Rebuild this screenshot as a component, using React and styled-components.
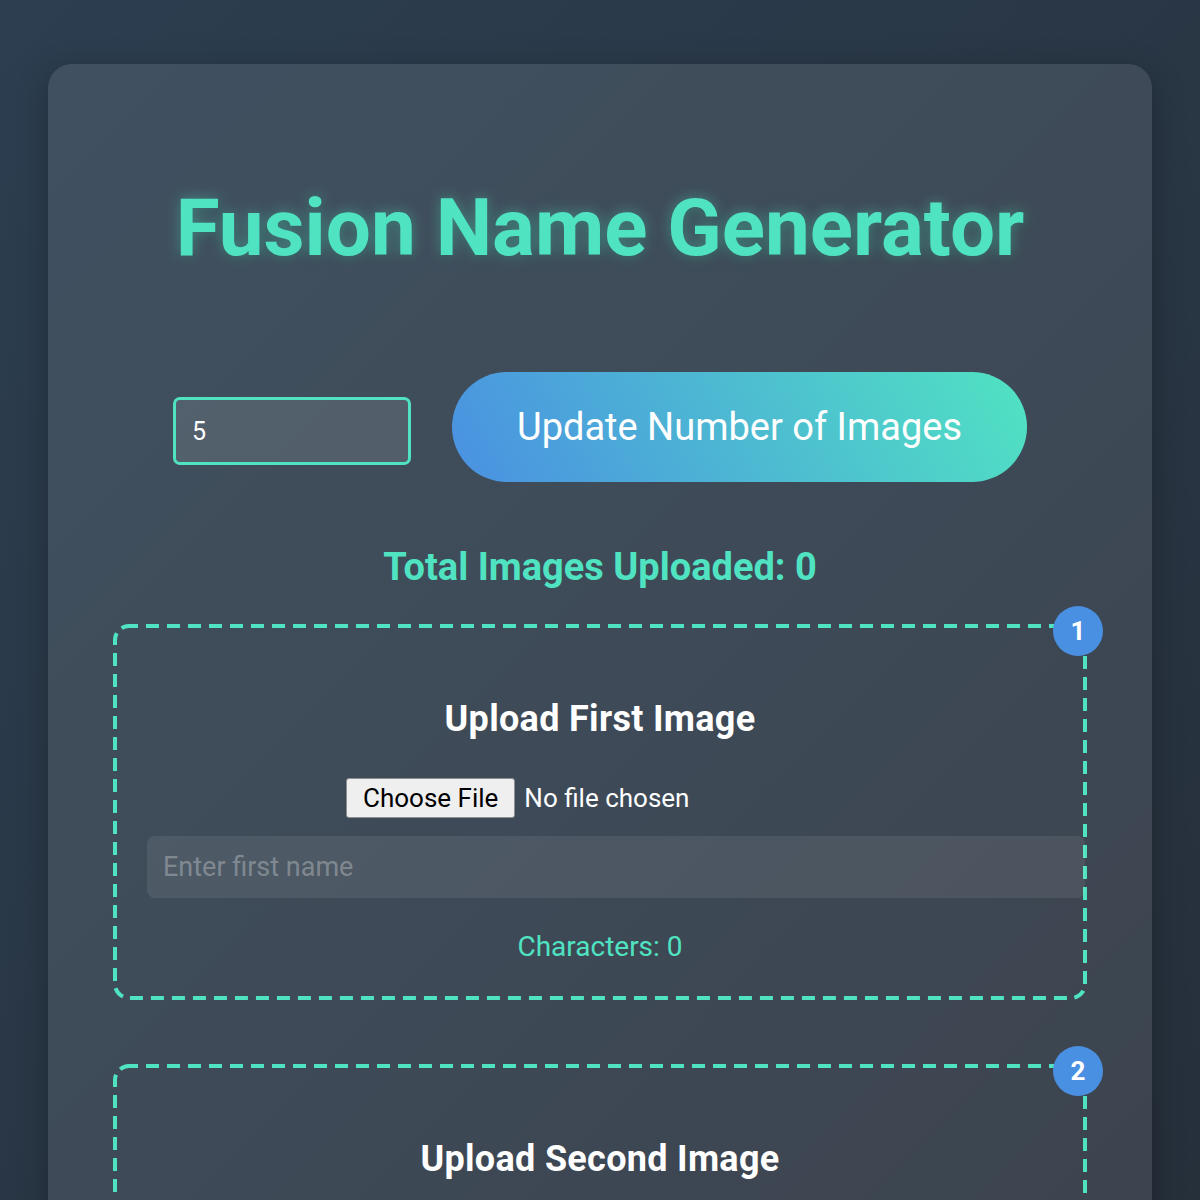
import React, { useState } from 'react'
import styled, { createGlobalStyle } from 'styled-components'

const GlobalStyle = createGlobalStyle`
  html, body {
    margin: 0;
    padding: 0;
  }
  body {
    min-height: 1200px;
    font-family: Roboto, 'Liberation Sans', sans-serif;
    background: linear-gradient(135deg, #2c3e50 0%, #262f3a 60%, #20262e 100%);
    color: #ffffff;
  }
`

// dashed outline drawn as svg so dash length matches (13 on / 8 off)
const dashedFrame = `url("data:image/svg+xml,%3Csvg xmlns='http://www.w3.org/2000/svg' width='100%25' height='100%25'%3E%3Crect width='100%25' height='100%25' rx='16' ry='16' fill='none' stroke='%2350E3C2' stroke-width='8' stroke-dasharray='13 8' stroke-dashoffset='4'/%3E%3C/svg%3E")`

const Page = styled.div`
  padding: 64px 48px 0;
`

const Card = styled.div`
  background: rgba(255, 255, 255, 0.1);
  border-radius: 24px;
  box-shadow: 0 8px 32px rgba(0, 0, 0, 0.25);
  padding: 49px 65px 65px;
`

const Title = styled.h1`
  margin: 67px 0 96px;
  font-size: 80px;
  line-height: 1.2;
  font-weight: 700;
  text-align: center;
  color: #50e3c2;
  text-shadow: 0 0 14px rgba(80, 227, 194, 0.45), 0 4px 10px rgba(0, 0, 0, 0.15);
`

const Controls = styled.div`
  display: flex;
  justify-content: center;
  align-items: center;
  gap: 41px;
`

const CountInput = styled.input`
  box-sizing: border-box;
  width: 238px;
  height: 68px;
  margin-top: 8px;
  padding: 0 16px;
  border: 3px solid #50e3c2;
  border-radius: 7px;
  background: rgba(255, 255, 255, 0.1);
  color: #ffffff;
  font-family: Roboto, 'Liberation Sans', sans-serif;
  font-size: 25px;
  outline: none;
`

const UpdateButton = styled.button`
  box-sizing: border-box;
  height: 110px;
  padding: 0 65px;
  border: none;
  border-radius: 55px;
  background: linear-gradient(60deg, #4a90e2 0%, #50e3c2 100%);
  color: #ffffff;
  font-family: Roboto, 'Liberation Sans', sans-serif;
  font-size: 38px;
  font-weight: 400;
  cursor: pointer;
`

const Total = styled.h2`
  margin: 63px 0 33px;
  font-size: 38px;
  line-height: 1.2;
  font-weight: 700;
  text-align: center;
  color: #50e3c2;
`

const UploadBox = styled.div`
  position: relative;
  border: 4px solid transparent;
  border-radius: 16px;
  background-image: ${dashedFrame};
  background-origin: border-box;
  background-clip: border-box;
  background-repeat: no-repeat;
  padding: 30px;
  margin-bottom: 64px;
  text-align: center;
`

const Badge = styled.span`
  position: absolute;
  top: -22px;
  right: -20px;
  width: 50px;
  height: 50px;
  border-radius: 50%;
  background: #4a90e2;
  color: #ffffff;
  font-size: 26px;
  font-weight: 700;
  display: flex;
  align-items: center;
  justify-content: center;
`

const BoxTitle = styled.h3`
  margin: 40px 0 37px;
  font-size: 36px;
  line-height: 1.2;
  letter-spacing: 0.3px;
  font-weight: 700;
  color: #ffffff;
`

const FileInput = styled.input`
  display: block;
  margin: 0 auto 18px;
  width: 508px;
  height: 40px;
  font-family: Roboto, 'Liberation Sans', sans-serif;
  font-size: 26px;
  color: #ffffff;

  &::file-selector-button {
    font-family: Roboto, 'Liberation Sans', sans-serif;
    font-size: 26px;
    height: 40px;
    padding: 0 16px;
    margin-right: 9px;
    background: #efefef;
    color: #000000;
    border: 1px solid #8f8f8f;
    border-radius: 3px;
  }
`

const NameInput = styled.input`
  display: block;
  width: 100%;
  height: 62px;
  padding: 0 16px;
  border: none;
  border-radius: 8px;
  background: rgba(255, 255, 255, 0.08);
  color: #ffffff;
  font-family: Roboto, 'Liberation Sans', sans-serif;
  font-size: 27px;
  outline: none;

  &::placeholder {
    color: rgba(255, 255, 255, 0.3);
  }
`

const CharCount = styled.p`
  margin: 32px 0 3px;
  font-size: 28px;
  line-height: 1.2;
  color: #50e3c2;
`

const ordinals = ['First', 'Second', 'Third', 'Fourth', 'Fifth']

const UploadSlot = ({ index }) => {
  const [name, setName] = useState('')
  const label = ordinals[index] || `#${index + 1}`
  return (
    <UploadBox>
      <Badge>{index + 1}</Badge>
      <BoxTitle>Upload {label} Image</BoxTitle>
      <FileInput type='file' accept='image/*' />
      <NameInput
        type='text'
        placeholder={`Enter ${label.toLowerCase()} name`}
        value={name}
        onChange={(e) => setName(e.target.value)}
      />
      <CharCount>Characters: {name.length}</CharCount>
    </UploadBox>
  )
}

const App = () => {
  const [count, setCount] = useState(5)
  const [slots, setSlots] = useState(5)

  return (
    <>
      <GlobalStyle />
      <Page>
        <Card>
          <Title>Fusion Name Generator</Title>
          <Controls>
            <CountInput
              type='number'
              value={count}
              onChange={(e) => setCount(e.target.value)}
            />
            <UpdateButton onClick={() => setSlots(Number(count) || 0)}>
              Update Number of Images
            </UpdateButton>
          </Controls>
          <Total>Total Images Uploaded: 0</Total>
          {Array.from({ length: slots }).map((_, i) => (
            <UploadSlot key={i} index={i} />
          ))}
        </Card>
      </Page>
    </>
  )
}

export default App
